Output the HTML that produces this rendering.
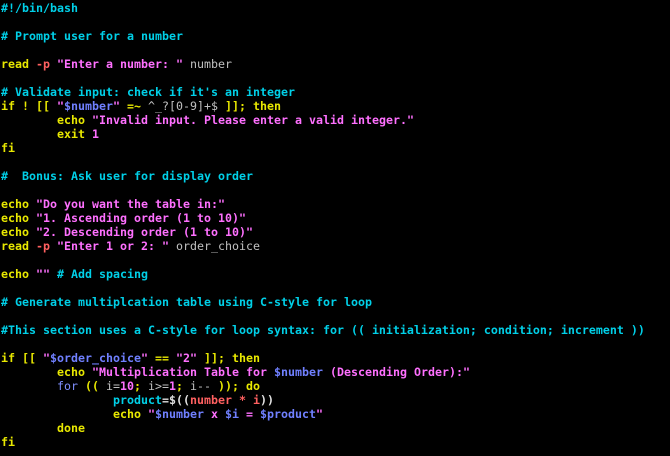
<!DOCTYPE html><html><head><style>
body{margin:0;background:#000;width:670px;height:456px;overflow:hidden}
pre{margin:0;padding:1px 0 0 1px;font:bold 11.63px/14px "DejaVu Sans Mono","Liberation Mono",monospace;color:#c0c0c0;tab-size:8}
.c{color:#00d0e8}.k{color:#e8e800}.s{color:#ff70ff}.v{color:#7080ff}.r{color:#ff6060}.g{color:#c0c0c0;font-weight:normal}.b{color:#8090ff;font-weight:normal}.w{color:#e0e0e0}
</style></head><body><pre><span class="c">#!/bin/bash</span>

<span class="c"># Prompt user for a number</span>

<span class="k">read</span> <span class="r">-p</span> <span class="s">"Enter a number: "</span> <span class="g">number</span>

<span class="c"># Validate input: check if it's an integer</span>
<span class="k">if</span> <span class="k">!</span> <span class="k">[[</span> <span class="s">"</span><span class="v">$number</span><span class="s">"</span> <span class="k">=~</span> <span class="g">^_?[0-9]+$</span> <span class="k">]];</span> <span class="k">then</span>
	<span class="k">echo</span> <span class="s">"Invalid input. Please enter a valid integer."</span>
	<span class="k">exit</span> <span class="s">1</span>
<span class="k">fi</span>

<span class="c">#  Bonus: Ask user for display order</span>

<span class="k">echo</span> <span class="s">"Do you want the table in:"</span>
<span class="k">echo</span> <span class="s">"1. Ascending order (1 to 10)"</span>
<span class="k">echo</span> <span class="s">"2. Descending order (1 to 10)"</span>
<span class="k">read</span> <span class="r">-p</span> <span class="s">"Enter 1 or 2: "</span> <span class="g">order_choice</span>

<span class="k">echo</span> <span class="s">""</span> <span class="c"># Add spacing</span>

<span class="c"># Generate multiplcation table using C-style for loop</span>

<span class="c">#This section uses a C-style for loop syntax: for (( initialization; condition; increment ))</span>

<span class="k">if</span> <span class="k">[[</span> <span class="s">"</span><span class="v">$order_choice</span><span class="s">"</span> <span class="k">==</span> <span class="s">"2"</span> <span class="k">]];</span> <span class="k">then</span>
	<span class="k">echo</span> <span class="s">"Multiplication Table for </span><span class="v">$number</span><span class="s"> (Descending Order):"</span>
	<span class="b">for</span> <span class="k">((</span> <span class="g">i=</span><span class="s">10</span><span class="k">;</span> <span class="g">i&gt;=</span><span class="s">1</span><span class="k">;</span> <span class="g">i--</span> <span class="k">));</span> <span class="k">do</span>
		<span class="c">product</span><span class="w">=$((</span><span class="r">number * i</span><span class="w">))</span>
		<span class="k">echo</span> <span class="s">"</span><span class="v">$number</span><span class="s"> x </span><span class="v">$i</span><span class="s"> = </span><span class="v">$product</span><span class="s">"</span>
	<span class="k">done</span>
<span class="k">fi</span>
</pre></body></html>
